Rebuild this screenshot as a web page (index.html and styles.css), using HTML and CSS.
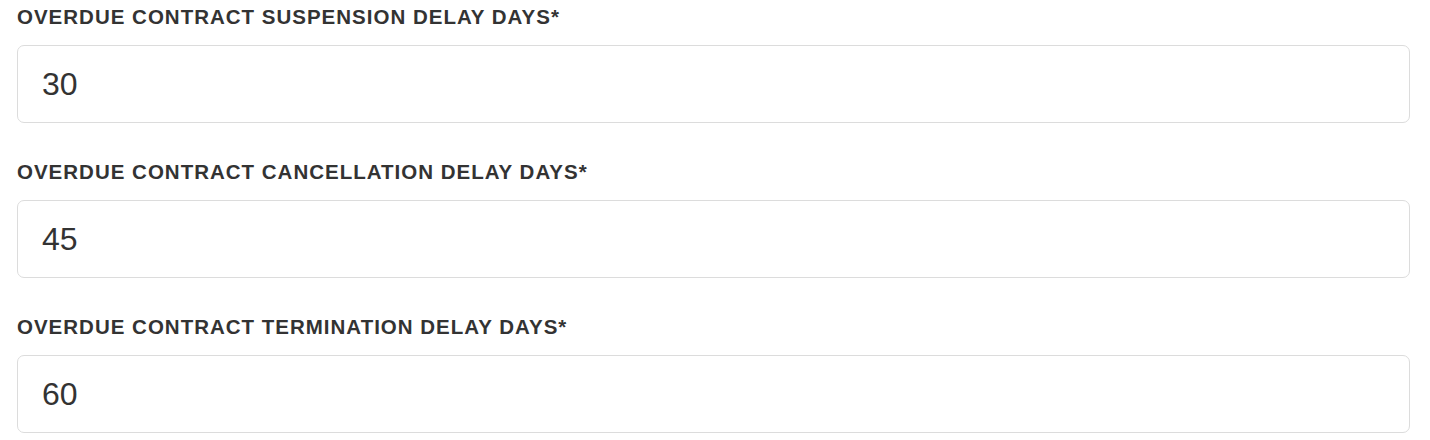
FILE: index.html
```html
<!DOCTYPE html>
<html lang="en">
<head>
    <meta charset="UTF-8">
    <meta name="viewport" content="width=device-width, initial-scale=1.0">
    <title>Overdue Contract Settings</title>
    <link rel="stylesheet" href="styles.css">
</head>
<body>
    <form class="settings-form">
        <div class="field">
            <label for="suspension-days">Overdue Contract Suspension Delay Days*</label>
            <input type="text" id="suspension-days" value="30">
        </div>

        <div class="field">
            <label for="cancellation-days">Overdue Contract Cancellation Delay Days*</label>
            <input type="text" id="cancellation-days" value="45">
        </div>

        <div class="field">
            <label for="termination-days">Overdue Contract Termination Delay Days*</label>
            <input type="text" id="termination-days" value="60">
        </div>
    </form>
</body>
</html>
```

FILE: styles.css
```css
*, :after, :before {
    margin: 0;
    padding: 0;
    box-sizing: border-box;
}

body {
    background: #fff;
    color: #333;
    font-family: 'Liberation Sans', Arial, sans-serif;
    overflow: hidden;
}

.settings-form {
    width: 1410px;
    padding: 5px 0 0 17px;
}

.field {
    margin-bottom: 37px;
}

.field label {
    display: block;
    font-size: 20.5px;
    line-height: 24px;
    font-weight: bold;
    letter-spacing: 1px;
    text-transform: uppercase;
    color: #333;
    margin-bottom: 16px;
}

.field input {
    display: block;
    width: 100%;
    height: 78px;
    padding: 0 24px;
    font-family: inherit;
    font-size: 32px;
    color: #333;
    background: #fff;
    border: 1.5px solid #dcdcdc;
    border-radius: 7px;
    outline: none;
}
```
